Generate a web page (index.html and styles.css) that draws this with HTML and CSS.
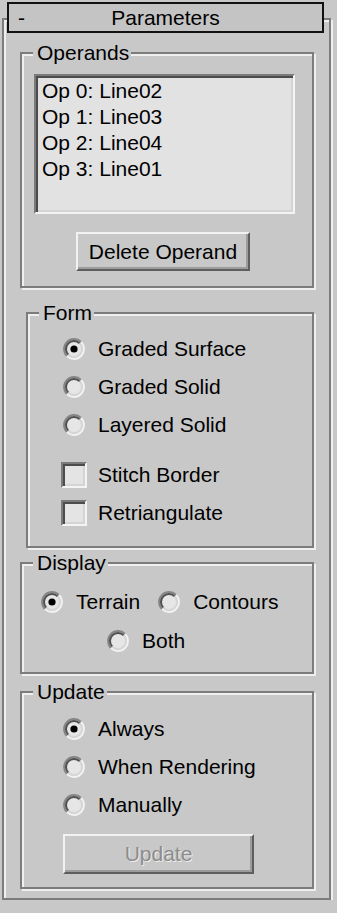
FILE: index.html
```html
<!DOCTYPE html>
<html lang="en">
<head>
    <meta charset="UTF-8">
    <meta name="viewport" content="width=device-width, initial-scale=1.0">
    <title>Parameters</title>
    <link rel="stylesheet" href="styles.css">
</head>
<body>
    <svg class="defs" width="0" height="0" aria-hidden="true">
        <symbol id="radio" viewBox="0 0 22 22">
            <circle cx="11" cy="11" r="8" fill="#e6e6e6"/>
            <path d="M3.93 18.07 A10 10 0 0 1 18.07 3.93" fill="none" stroke="#858585" stroke-width="2"/>
            <path d="M18.07 3.93 A10 10 0 0 1 3.93 18.07" fill="none" stroke="#f2f2f2" stroke-width="2"/>
            <path d="M5.34 16.66 A8 8 0 0 1 16.66 5.34" fill="none" stroke="#505050" stroke-width="2"/>
            <path d="M16.66 5.34 A8 8 0 0 1 5.34 16.66" fill="none" stroke="#d6d6d6" stroke-width="2"/>
        </symbol>
        <symbol id="radio-on" viewBox="0 0 22 22">
            <use href="#radio"/>
            <circle cx="11" cy="11" r="3.6" fill="#000"/>
        </symbol>
    </svg>

    <div class="rollout">
        <div class="rollout-header">
            <span class="toggle">-</span>
            <span class="title">Parameters</span>
        </div>

        <!-- Operands -->
        <fieldset class="group operands">
            <legend>Operands</legend>
            <div class="group-body">
                <div class="listbox">
                    <div>Op 0: Line02</div>
                    <div>Op 1: Line03</div>
                    <div>Op 2: Line04</div>
                    <div>Op 3: Line01</div>
                </div>
                <button class="btn btn-delete">Delete Operand</button>
            </div>
        </fieldset>

        <!-- Form -->
        <fieldset class="group form">
            <legend>Form</legend>
            <div class="group-body">
                <div class="option"><span class="slot"><svg class="radio"><use href="#radio-on"/></svg></span>Graded Surface</div>
                <div class="option"><span class="slot"><svg class="radio"><use href="#radio"/></svg></span>Graded Solid</div>
                <div class="option"><span class="slot"><svg class="radio"><use href="#radio"/></svg></span>Layered Solid</div>
                <div class="checks">
                    <div class="option"><span class="slot"><span class="check"></span></span>Stitch Border</div>
                    <div class="option"><span class="slot"><span class="check"></span></span>Retriangulate</div>
                </div>
            </div>
        </fieldset>

        <!-- Display -->
        <fieldset class="group display">
            <legend>Display</legend>
            <div class="option-row first">
                <div class="option"><span class="slot"><svg class="radio"><use href="#radio-on"/></svg></span>Terrain</div>
                <div class="option"><span class="slot"><svg class="radio"><use href="#radio"/></svg></span>Contours</div>
            </div>
            <div class="option-row second">
                <div class="option"><span class="slot"><svg class="radio"><use href="#radio"/></svg></span>Both</div>
            </div>
        </fieldset>

        <!-- Update -->
        <fieldset class="group update">
            <legend>Update</legend>
            <div class="group-body">
                <div class="option"><span class="slot"><svg class="radio"><use href="#radio-on"/></svg></span>Always</div>
                <div class="option"><span class="slot"><svg class="radio"><use href="#radio"/></svg></span>When Rendering</div>
                <div class="option"><span class="slot"><svg class="radio"><use href="#radio"/></svg></span>Manually</div>
                <button class="btn btn-update" disabled>Update</button>
            </div>
        </fieldset>
    </div>
</body>
</html>
```

FILE: styles.css
```css
body {
    margin: 0;
    padding: 0;
    background-color: #c8c8c8;
    font-family: "Liberation Sans", Arial, sans-serif;
    font-size: 21px;
    color: #000;
}
.defs {
    position: absolute;
    width: 0;
    height: 0;
}
.rollout {
    box-sizing: border-box;
    width: 329px;
    margin: 18px 0 0 2px;
    padding: 0 0 9px 0;
    border: 2px solid #7c7c7c;
    box-shadow: 2px 2px 0 #efefef, inset 2px 2px 0 #efefef;
}
.rollout-header {
    box-sizing: border-box;
    display: grid;
    grid-template-columns: 30px 1fr 30px;
    align-items: center;
    width: 317px;
    height: 31px;
    margin: -18px 0 0 3px;
    border: 2px solid #111;
    background: #c4c4c4;
    line-height: 27px;
}
.toggle {
    padding-left: 9px;
}
.title {
    text-align: center;
}
.group {
    box-sizing: border-box;
    min-inline-size: 0;
    margin: 0;
    padding: 0;
    border: 2px solid #7c7c7c;
    box-shadow: 2px 2px 0 #efefef, inset 2px 2px 0 #efefef;
}
.group legend {
    margin-left: 11px;
    padding: 0 2px 0 4px;
    line-height: 24px;
    background: #c8c8c8;
}
.operands {
    width: 294px;
    margin: 8px 0 0 16px;
    padding: 9px 0 15px 0;
}
.operands .group-body {
    padding-left: 12px;
}
.listbox {
    box-sizing: border-box;
    width: 261px;
    height: 140px;
    padding: 2px 0 0 6px;
    background: #e2e2e2;
    border: 2px solid;
    border-color: #7a7a7a #f4f4f4 #f4f4f4 #7a7a7a;
    box-shadow: inset 2px 2px 0 #4c4c4c, inset -2px -2px 0 #d4d4d4;
    line-height: 26px;
}
.btn {
    display: block;
    box-sizing: border-box;
    padding: 0;
    font: inherit;
    color: #000;
    background: #c8c8c8;
    border: 2px solid;
    border-color: #f2f2f2 #5e5e5e #5e5e5e #f2f2f2;
    box-shadow: inset -2px -2px 0 #9c9c9c;
}
.btn-delete {
    width: 174px;
    height: 39px;
    margin: 18px 0 0 42px;
}
.option {
    display: flex;
    align-items: center;
    height: 38px;
}
.slot {
    display: flex;
    align-items: center;
    justify-content: center;
    width: 26px;
    height: 26px;
    margin-right: 11px;
}
.radio {
    width: 22px;
    height: 22px;
}
.check {
    box-sizing: border-box;
    width: 26px;
    height: 26px;
    background: #e4e4e4;
    border: 2px solid;
    border-color: #7a7a7a #f4f4f4 #f4f4f4 #7a7a7a;
    box-shadow: inset 2px 2px 0 #4c4c4c, inset -2px -2px 0 #d4d4d4;
}
.form {
    width: 288px;
    margin: 13px 0 0 22px;
    padding: 5px 0 14px 0;
}
.form .group-body {
    padding-left: 33px;
}
.checks {
    margin-top: 12px;
}
.display {
    width: 294px;
    margin: 3px 0 0 16px;
    padding: 8px 0 12px 0;
}
.option-row {
    display: flex;
    gap: 16px;
}
.option-row.first {
    padding-left: 17px;
}
.option-row.second {
    margin-top: 1px;
    padding-left: 83px;
}
.update {
    width: 294px;
    margin: 6px 0 0 16px;
    padding: 6px 0 13px 0;
}
.update .group-body {
    padding-left: 39px;
}
.btn-update {
    width: 191px;
    height: 40px;
    margin: 10px 0 0 2px;
    color: #8c8c8c;
    text-shadow: 1px 1px 0 #ececec;
}
```
